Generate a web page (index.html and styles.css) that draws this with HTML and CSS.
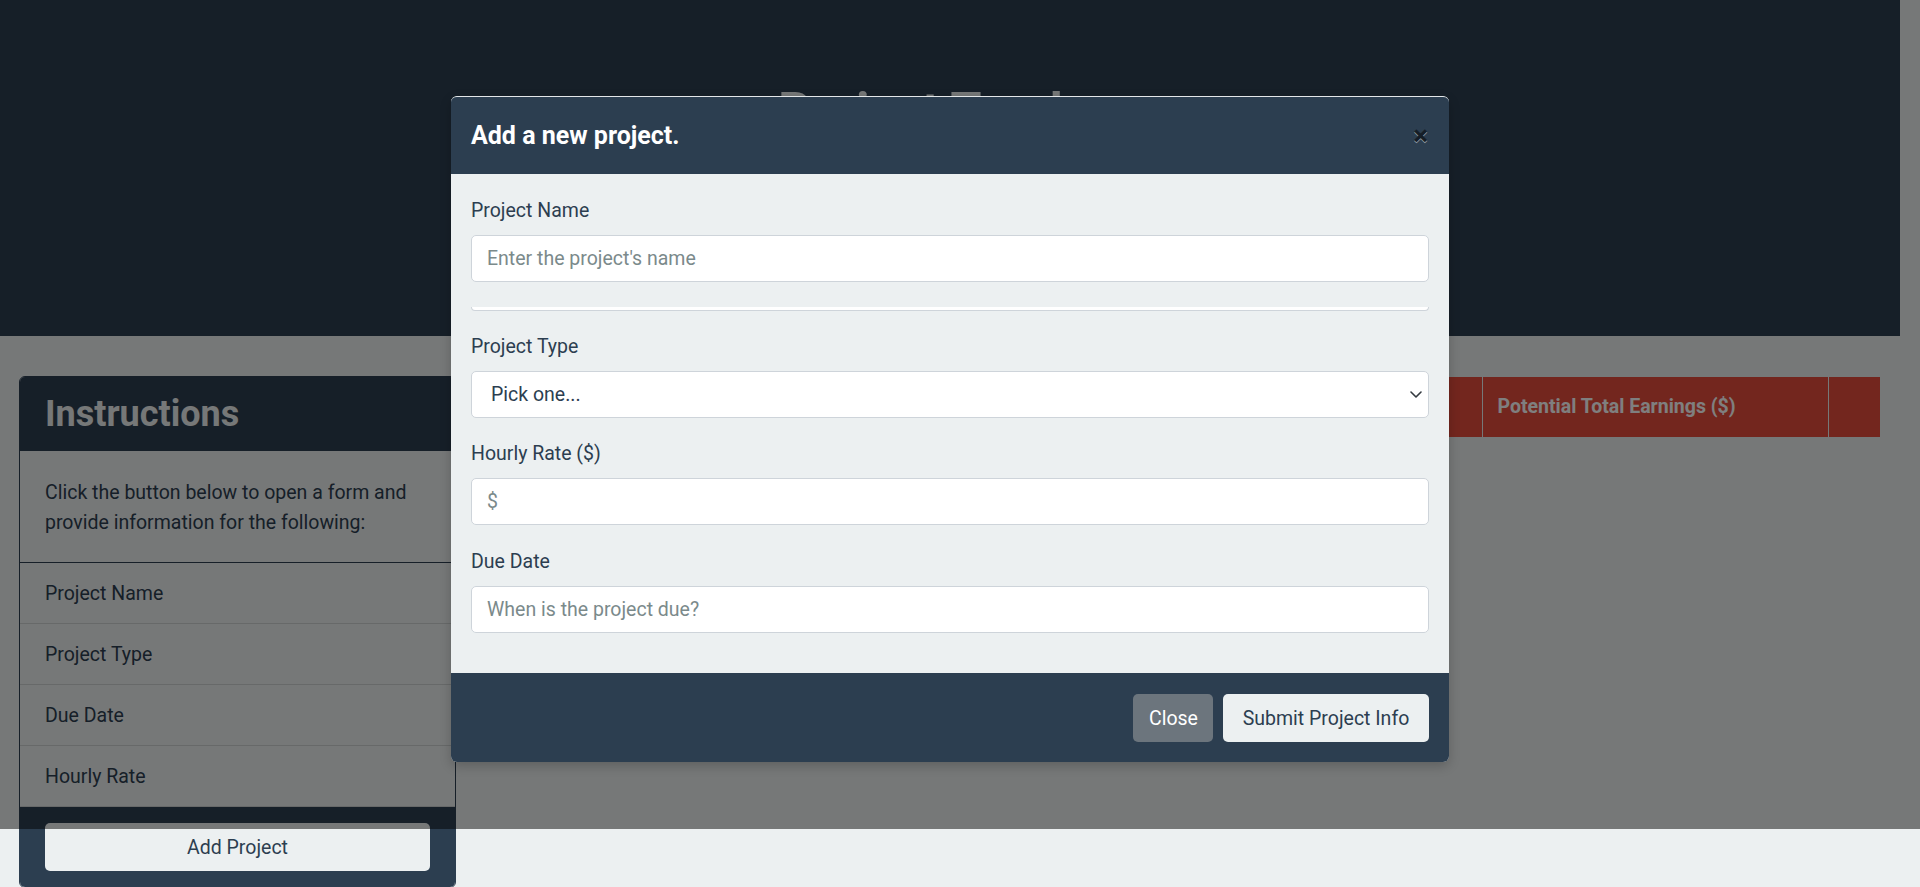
FILE: index.html
```html
<!DOCTYPE html>
<html lang="en">
<head>
<meta charset="utf-8">
<title>Project Tracker</title>
<link rel="stylesheet" href="styles.css">
</head>
<body>
<div class="page">
  <header class="hero">
    <h1 class="hero-title">Project Tracker</h1>
  </header>
  <main class="content">
    <section class="card">
      <h2 class="card-header">Instructions</h2>
      <p class="card-body">Click the button below to open a form and<br>provide information for the following:</p>
      <ul class="list">
        <li>Project Name</li>
        <li>Project Type</li>
        <li>Due Date</li>
        <li>Hourly Rate</li>
      </ul>
      <div class="card-footer">
        <button class="btn btn-light btn-block" type="button">Add Project</button>
      </div>
    </section>
    <div class="table-wrap">
      <table class="projects">
        <colgroup>
          <col class="c-a"><col class="c-a"><col class="c-a"><col class="c-a"><col class="c-a"><col class="c-earn"><col class="c-act">
        </colgroup>
        <thead>
          <tr>
            <th>Project Name</th>
            <th>Project Type</th>
            <th>Hourly Rate</th>
            <th>Due Date</th>
            <th>Days Left</th>
            <th>Potential Total Earnings ($)</th>
            <th></th>
          </tr>
        </thead>
        <tbody></tbody>
      </table>
    </div>
  </main>
</div>

<div class="backdrop"></div>

<div class="modal" role="dialog">
  <div class="modal-header">
    <h5 class="modal-title">Add a new project.</h5>
    <button class="close" type="button" aria-label="Close">&times;</button>
  </div>
  <form class="modal-body">
    <label class="label" for="pname">Project Name</label>
    <input class="input" id="pname" type="text" placeholder="Enter the project's name">
    <div class="ghost"></div>
    <label class="label" for="ptype">Project Type</label>
    <div class="select-wrap">
      <select class="input select" id="ptype">
        <option>Pick one...</option>
      </select>
      <svg class="chevron" width="12" height="7" viewBox="0 0 12 7" aria-hidden="true"><path d="M1 1 L6 6 L11 1" fill="none" stroke="#343a40" stroke-width="1.6" stroke-linecap="round" stroke-linejoin="round"/></svg>
    </div>
    <label class="label" for="prate">Hourly Rate ($)</label>
    <input class="input" id="prate" type="text" placeholder="$">
    <label class="label" for="pdue">Due Date</label>
    <input class="input" id="pdue" type="text" placeholder="When is the project due?">
  </form>
  <div class="modal-footer">
    <button class="btn btn-secondary btn-close" type="button">Close</button>
    <button class="btn btn-light btn-submit" type="button">Submit Project Info</button>
  </div>
</div>
</body>
</html>
```
FILE: styles.css
```css
* { box-sizing: border-box; }

html, body {
  margin: 0;
  padding: 0;
}

body {
  background: #ecf0f1;
  color: #2c3e50;
  font-family: Roboto, "Noto Sans", sans-serif;
  font-size: 19.5px;
  line-height: 29.5px;
  height: 887px;
  overflow: hidden;
  position: relative;
}

.page {
  padding-right: 20px;
}

/* Hero */
.hero {
  background: #2c3e50;
  height: 336px;
  padding-top: 81px;
}

.hero-title {
  margin: 0;
  text-align: center;
  color: #ecf0f1;
  font-size: 50px;
  line-height: 60px;
  font-weight: 700;
}

/* Content */
.content {
  display: flex;
  align-items: flex-start;
  gap: 19px;
  padding: 40px 20px 0 19px;
}

.card {
  width: 437px;
  flex: none;
  border: 1px solid #2c3e50;
  border-radius: 6px;
  overflow: hidden;
  background: #ecf0f1;
}

.card-header {
  margin: 0;
  height: 74px;
  background: #2c3e50;
  color: #ecf0f1;
  font-size: 36px;
  line-height: 74px;
  font-weight: 700;
  padding: 0 25px;
}

.card-body {
  margin: 0;
  padding: 27px 25px 25px;
  white-space: nowrap;
}

.list {
  list-style: none;
  margin: 0;
  padding: 0;
  border-top: 1px solid #2c3e50;
}

.list li {
  padding: 16px 25px 15px;
  line-height: 29px;
  border-bottom: 1px solid rgba(0, 0, 0, 0.125);
}

.card-footer {
  background: #2c3e50;
  padding: 16px 25px 16px;
}

/* Buttons */
.btn {
  font-family: inherit;
  font-size: 19.5px;
  line-height: 29px;
  height: 48px;
  border: 0;
  border-radius: 5px;
  padding: 0 16px;
  cursor: pointer;
}

.btn-light {
  background: #ecf0f1;
  color: #2c3e50;
}

.btn-secondary {
  background: #6c757d;
  color: #ffffff;
}

.btn-block {
  display: block;
  width: 100%;
}

.btn-close { width: 80px; }
.btn-submit { width: 206px; }

/* Table */
.table-wrap {
  flex: 1;
  padding-top: 1px;
}

.projects {
  width: 100%;
  border-collapse: collapse;
  table-layout: fixed;
}

.c-a { width: auto; }
.c-earn { width: 346px; }
.c-act { width: 52px; }

.projects th {
  background: #e74c3c;
  color: #ffffff;
  height: 60px;
  padding: 0 15px;
  text-align: left;
  font-weight: 700;
  white-space: nowrap;
  overflow: hidden;
  border-left: 1px solid #ecf0f1;
}

.projects th:first-child { border-left: 0; }

/* Backdrop */
.backdrop {
  position: absolute;
  top: 0;
  left: 0;
  width: 100%;
  height: 829px;
  background: rgba(0, 0, 0, 0.5);
}

/* Modal */
.modal {
  position: absolute;
  top: 96px;
  left: 451px;
  width: 998px;
  background: #ecf0f1;
  border-top: 1px solid #e3e7e9;
  border-radius: 6px;
  overflow: hidden;
  box-shadow: 0 4px 12px rgba(0, 0, 0, 0.2);
}

.modal-header {
  height: 77px;
  background: #2c3e50;
  display: flex;
  align-items: center;
  padding: 0 19px 0 20px;
}

.modal-title {
  margin: 0;
  color: #ffffff;
  font-size: 25px;
  line-height: 30px;
  font-weight: 700;
}

.close {
  margin-left: auto;
  background: none;
  border: 0;
  padding: 0 2px;
  font-family: inherit;
  font-size: 28px;
  line-height: 30px;
  font-weight: 700;
  color: #000000;
  opacity: 0.5;
  text-shadow: 0 1px 0 #ffffff;
}

.modal-body {
  display: flex;
  flex-direction: column;
  padding: 20px 20px;
}

.label {
  display: block;
  line-height: 29px;
  padding-top: 2px;
  margin-bottom: 10px;
}

.input {
  display: block;
  width: 100%;
  height: 47px;
  font-family: inherit;
  font-size: 19.5px;
  color: #2c3e50;
  background: #ffffff;
  border: 1px solid #ced4da;
  border-radius: 5px;
  padding: 0 15px;
  margin-bottom: 20px;
}

.input::placeholder {
  color: #7b8a8b;
  opacity: 1;
}

.ghost {
  height: 4px;
  margin: 5px 0 19px;
  background: #ffffff;
  border: 1px solid #ced4da;
  border-top: 0;
  border-radius: 0 0 5px 5px;
}

.select-wrap {
  position: relative;
}

.select {
  appearance: none;
  -webkit-appearance: none;
  padding-left: 19px;
  margin-bottom: 19px;
}

.chevron {
  position: absolute;
  right: 7px;
  top: 20px;
}

.modal-footer {
  background: #2c3e50;
  height: 89px;
  display: flex;
  justify-content: flex-end;
  align-items: flex-start;
  gap: 10px;
  padding: 21px 20px 0;
}
```
